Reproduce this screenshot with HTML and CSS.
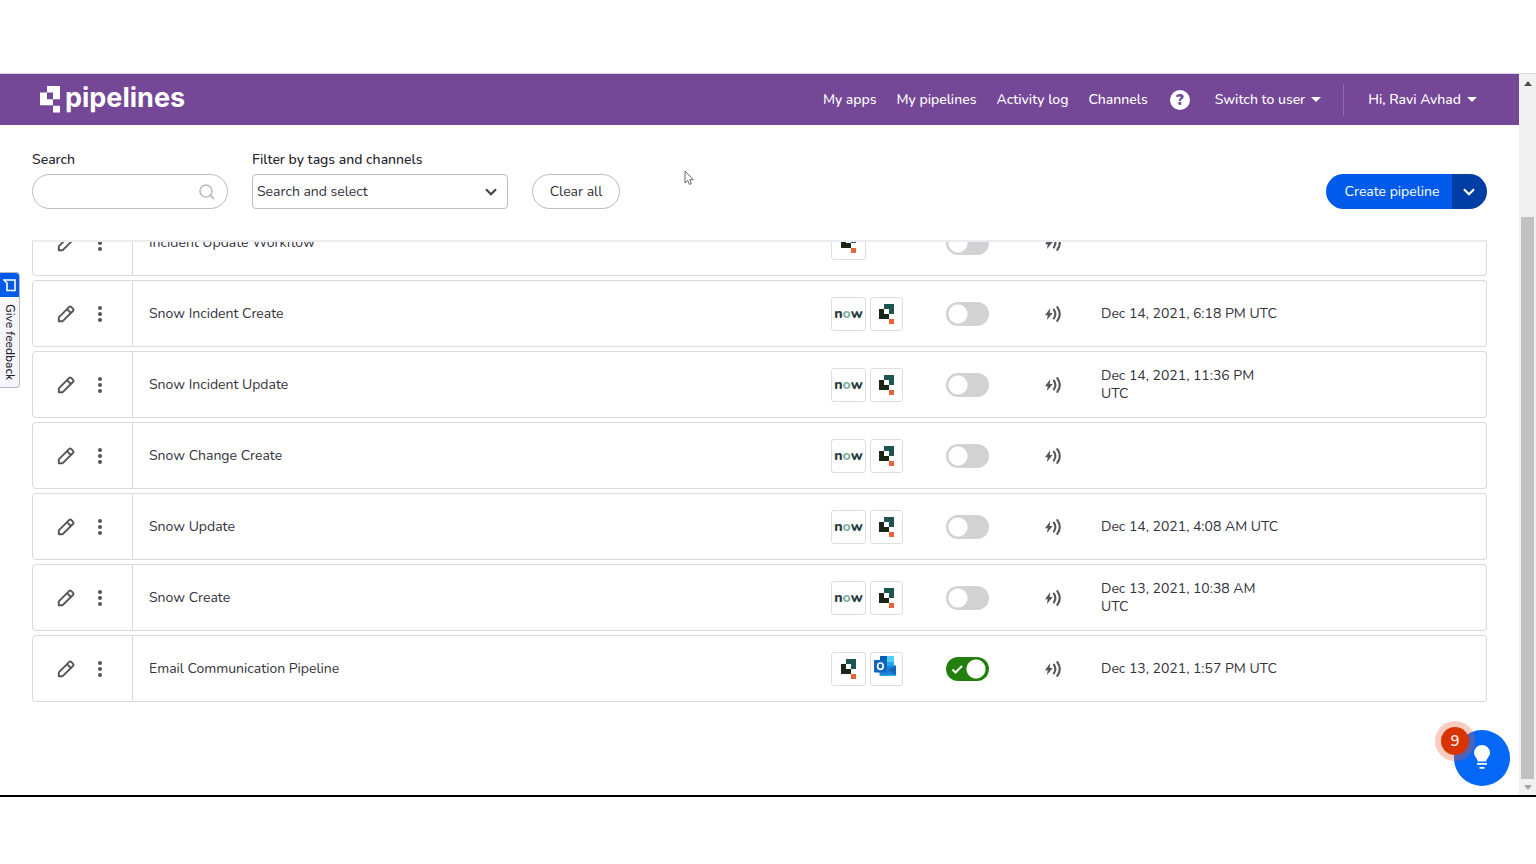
FILE: index.html
```html
<!DOCTYPE html>
<html lang="en">
<head>
<meta charset="utf-8">
<meta name="viewport" content="width=device-width, initial-scale=1">
<title>Pipelines</title>
<link rel="stylesheet" href="styles.css">
</head>
<body>
<svg class="sprite" aria-hidden="true">
  <symbol id="pencil" viewBox="0 0 18 18"><path d="M1.800 16.200v-3.900L12 2.100a1.700 1.700 0 0 1 2.400 0l1.500 1.500a1.700 1.700 0 0 1 0 2.400L5.700 16.200zM10 4.200l3.800 3.800" fill="none" stroke="currentColor" stroke-width="1.900" stroke-linejoin="round"/></symbol>
  <symbol id="dots" viewBox="0 0 6 18"><circle cx="3" cy="3" r="2"/><circle cx="3" cy="9" r="2"/><circle cx="3" cy="15" r="2"/></symbol>
  <symbol id="trigger" viewBox="0 0 18 18"><path d="M5.200 3.200 0 10.300h2.700L2 15l5.700-7H4.700z" fill="currentColor"/><path d="M8.900 4.600q3 4.400 0 8.800M12.300 2.200q5 6.800 0 13.600" fill="none" stroke="currentColor" stroke-width="2.100" stroke-linecap="round"/></symbol>
  <symbol id="quick" viewBox="0 0 15 20"><path d="M5 0H15v10h-5V5H5z" fill="#1d5650"/><path d="M0 5h5v5h5v5H0z" fill="#1c2416"/><path d="M10 15h5v5h-5z" fill="#ec6238"/></symbol>
  <symbol id="outlook" viewBox="0 0 22 21"><path d="M6 0h14v11H6z" fill="#1490df"/><path d="M6 0h7v6H6z" fill="#0a5fb0"/><path d="M13 0h7v6h-7z" fill="#50d0f5"/><path d="M13 6h7v6h-7z" fill="#28a8ea"/><path d="M5.500 10.500 22 9.500V20H7q-1.500 0-1.500-1.500z" fill="#1b84d8"/><path d="M22 9.500V19l-8-5z" fill="#1467b8"/><path d="M6 19.500 22 19v1H7z" fill="#35b8f1"/><rect y="4" width="13" height="12.500" rx="1" fill="#0c65c0"/><ellipse cx="6.400" cy="10.200" rx="2.800" ry="3.200" fill="none" stroke="#fff" stroke-width="1.700"/></symbol>
  <symbol id="chevron" viewBox="0 0 14 10"><path d="m2 2.300 5 5 5-5" fill="none" stroke="currentColor" stroke-width="2.200"/></symbol>
</svg>

<div class="window">
  <div class="app">
    <header class="topbar">
      <a class="brand" href="#">
        <svg width="21" height="27" viewBox="0 0 21 27" aria-hidden="true"><path d="M7 0h13v13.300h-7V6.500H7zM0 6.500h7v6.800h6v6H0zM13 19.800h7V26.500h-7z" fill="#fff"/></svg>
        <span>pipelines</span>
      </a>
      <nav class="nav">
        <a href="#">My apps</a>
        <a href="#">My pipelines</a>
        <a href="#">Activity log</a>
        <a href="#">Channels</a>
        <button class="help" type="button" aria-label="Help">?</button>
        <button class="menu" type="button">Switch to user <i class="caret"></i></button>
        <button class="menu user" type="button">Hi, Ravi Avhad <i class="caret"></i></button>
      </nav>
    </header>

    <form class="filters">
      <div class="field search">
        <label for="q">Search</label>
        <div class="control">
          <input id="q" type="text">
          <svg class="lens" width="18" height="18" viewBox="0 0 18 18" aria-hidden="true"><circle cx="8" cy="8" r="6" fill="none" stroke="#bcbcc2" stroke-width="1.700"/><path d="m12.400 12.400 3.600 3.600" stroke="#bcbcc2" stroke-width="1.900"/></svg>
        </div>
      </div>
      <div class="field tags">
        <label for="tags">Filter by tags and channels</label>
        <div class="control">
          <select id="tags"><option>Search and select</option></select>
          <svg class="arrow" width="14" height="10"><use href="#chevron"/></svg>
        </div>
      </div>
      <button class="clear" type="reset">Clear all</button>
      <div class="create">
        <button class="create-main" type="button">Create pipeline</button>
        <button class="create-more" type="button" aria-label="More options"><svg width="14" height="10"><use href="#chevron"/></svg></button>
      </div>
    </form>

    <main class="list">
      <table class="pipelines">
        <colgroup><col class="c-actions"><col><col class="c-channels"><col class="c-toggle"><col class="c-trigger"><col class="c-date"><col class="c-end"></colgroup>
        <tbody id="rows"></tbody>
      </table>
    </main>

    <button class="feedback" type="button">
      <span class="feedback-icon"><svg width="14" height="14" viewBox="0 0 14 14" aria-hidden="true"><path d="M1 2h11v10.500H4V5z" fill="none" stroke="#fff" stroke-width="1.600"/></svg></span>
      <span class="feedback-text">Give feedback</span>
    </button>

    <button class="tips" type="button" aria-label="Tips">
      <svg width="18" height="26" viewBox="0 0 18 26" aria-hidden="true"><path d="M9 0a8 8 0 0 1 8 8c0 3.500-3.500 5-3.700 8.500H4.700C4.500 13 1 11.500 1 8a8 8 0 0 1 8-8zM4 18h10v1.800H4zM6.500 22h5v1.800h-5z" fill="#fff"/></svg>
      <span class="badge">9</span>
    </button>
  </div>

  <div class="scrollbar" aria-hidden="true">
    <i class="up"></i><div class="thumb"></div><i class="down"></i>
  </div>
  <svg class="pointer" width="10" height="16" viewBox="0 0 10 16" aria-hidden="true"><path d="M1 1v12l2.700-2.600 1.700 4 2-.8-1.700-3.900h3.600z" fill="#fff" stroke="#66666c" stroke-width="1"/></svg>
</div>
<script src="app.js"></script>
</body>
</html>
```

FILE: styles.css
```css
* { box-sizing: border-box; }

body {
  margin: 0;
  height: 100vh;
  padding: 73px 0 67px;
  background: #fff;
  color: #33333b;
  font: 14px/18px "Nunito", "Nunito Sans", Lato, sans-serif;
}

button, input, select { font: inherit; color: inherit; margin: 0; }
button { cursor: pointer; border: 0; padding: 0; background: none; }
svg { display: block; }
.sprite { position: absolute; width: 0; height: 0; }

.window {
  position: relative;
  display: flex;
  height: 100%;
  border-top: 1px solid #dcd3e4;
  border-bottom: 2px solid #000;
}
.app {
  position: relative;
  flex: 1;
  min-width: 0;
  display: flex;
  flex-direction: column;
}

/* Header */
.topbar {
  display: flex;
  justify-content: space-between;
  align-items: center;
  flex: none;
  height: 51px;
  padding: 0 42px 0 40px;
  background: #744896;
  color: #fff;
}
.brand {
  display: flex;
  align-items: center;
  gap: 4px;
  padding-bottom: 1px;
  color: #fff;
  text-decoration: none;
  font: 700 27px/32px Inter, sans-serif;
}
.brand span { padding-bottom: 3px; }
.nav { display: flex; align-items: center; gap: 20px; font-weight: 500; }
.nav a { color: inherit; text-decoration: none; }
.help {
  width: 20px;
  height: 20px;
  margin: 0 5px 0 2px;
  border-radius: 50%;
  background: #fff;
  color: #744896;
  font-size: 16px;
  font-weight: 900;
}
.menu { display: flex; align-items: center; gap: 6px; font-weight: 500; }
.menu.user {
  height: 32px;
  margin-left: 2px;
  padding-left: 24px;
  border-left: 1px solid #8f6bab;
}
.caret {
  border: 5px solid transparent;
  border-top-color: #fff;
  border-bottom: 0;
}

/* Filters */
.filters {
  display: flex;
  align-items: flex-end;
  gap: 24px;
  flex: none;
  padding: 26px 32px 31px;
}
.field { display: flex; flex-direction: column; gap: 5px; }
.field label { color: #22222a; font-weight: 500; }
.search { width: 196px; }
.tags { width: 256px; }
.control { position: relative; }
.control input, .control select {
  display: block;
  width: 100%;
  height: 35px;
  border: 1px solid #bcbcc2;
  background: #fff;
}
.control input { border-radius: 18px; padding: 0 36px 0 16px; }
.control select { appearance: none; border-radius: 4px; padding: 0 32px 0 4px; }
.lens { position: absolute; right: 12px; top: 9px; }
.arrow { position: absolute; right: 10px; top: 13px; pointer-events: none; color: #44444a; }
.clear {
  width: 88px;
  height: 35px;
  border: 1px solid #bcbcc2;
  border-radius: 18px;
  background: #fff;
}
.create {
  display: flex;
  height: 35px;
  margin-left: auto;
  border-radius: 18px;
  overflow: hidden;
  color: #fff;
}
.create-main { width: 126px; padding-left: 6px; background: #005bea; }
.create-more { width: 35px; padding-left: 10px; background: #003ea6; }

/* Pipeline rows */
.list {
  flex: 1;
  min-height: 0;
  margin: 0 32px;
  border-top: 2px solid #ececf0;
  overflow: hidden;
}
.pipelines {
  width: 100%;
  margin-top: -37px;
  table-layout: fixed;
  border-collapse: separate;
  border-spacing: 0 4px;
}
.c-actions { width: 101px; }
.c-channels { width: 115px; }
.c-toggle { width: 99px; }
.c-trigger { width: 56px; }
.c-date { width: 180px; }
.c-end { width: 206px; }
.pipelines td {
  height: 67px;
  padding: 1px 0 0;
  border: solid #d9d9dc;
  border-width: 1px 0;
}
.pipelines td:first-child { border-width: 1px; border-radius: 4px 0 0 4px; }
.pipelines td:last-child { border-right-width: 1px; border-radius: 0 4px 4px 0; }
.pipelines .name { padding-left: 16px; }
.actions { display: flex; gap: 22px; padding-left: 24px; color: #55555a; }
.actions svg { fill: currentColor; }
.channels { display: flex; gap: 4px; }
.channel {
  display: flex;
  align-items: center;
  justify-content: center;
  width: 35px;
  height: 34px;
  border: 1px solid #dededf;
  border-radius: 3px;
  color: #283c3c;
  font: 800 14px/16px Nunito, Lato, sans-serif;
}
.channel + .channel { width: 33px; }
.channel.outlook { padding: 0 3px 5px 0; }
.channel em { color: #86b3a4; font-style: normal; }
.toggle {
  appearance: none;
  display: block;
  width: 43px;
  height: 24px;
  margin: 0;
  border-radius: 12px;
  background: radial-gradient(circle at 12px 12px, #fff 9px, transparent 10px) #d2d2d5;
}
.toggle:checked {
  background: radial-gradient(circle at 30px 12px, #fff 9px, transparent 10px) #23800f;
}
.switch { position: relative; display: block; }
.switch svg { position: absolute; left: 5px; top: 7px; }
.trigger { color: #55555a; }

/* Floating controls */
.feedback {
  position: absolute;
  left: 0;
  top: 198px;
  width: 20px;
  border: 1px solid #b9b9c0;
  border-left: 0;
  border-radius: 0 4px 4px 0;
  background: #f6f5fa;
  overflow: hidden;
  font-size: 12px;
  font-weight: 500;
  line-height: 20px;
  color: #22222a;
}
.feedback-icon {
  display: flex;
  align-items: center;
  justify-content: center;
  height: 24px;
  padding-left: 1px;
  background: #005bea;
}
.feedback-text { display: block; padding: 7px 0; writing-mode: vertical-rl; }
.tips {
  position: absolute;
  right: 9px;
  bottom: 9px;
  display: flex;
  align-items: center;
  justify-content: center;
  width: 56px;
  height: 56px;
  border-radius: 50%;
  background: #0567f5;
}
.badge {
  position: absolute;
  left: -13px;
  top: -3px;
  width: 28px;
  height: 28px;
  border-radius: 50%;
  background: #d93400;
  box-shadow: 0 0 0 6px rgba(240, 90, 50, .3);
  color: #fff;
  font-size: 15px;
  font-weight: 500;
  line-height: 28px;
  text-align: center;
}
.pointer { position: absolute; left: 684px; top: 96px; }

/* Scrollbar */
.scrollbar {
  display: flex;
  flex-direction: column;
  align-items: center;
  width: 17px;
  padding: 7px 0 5px;
  background: #f1f1f1;
}
.up { border: 4px solid transparent; border-bottom: 5px solid #505050; border-top: 0; }
.down { border: 4px solid transparent; border-top: 5px solid #a3a3a3; border-bottom: 0; }
.thumb { flex: 1; width: 13px; margin: 131px 0 6px; background: #c1c1c1; }
```

FILE: app.js
```js
const pipelines = [
  { name: "Incident Update Workflow", channels: ["quick"], date: "" },
  { name: "Snow Incident Create", channels: ["now", "quick"], date: "Dec 14, 2021, 6:18 PM UTC" },
  { name: "Snow Incident Update", channels: ["now", "quick"], date: "Dec 14, 2021, 11:36 PM UTC" },
  { name: "Snow Change Create", channels: ["now", "quick"], date: "" },
  { name: "Snow Update", channels: ["now", "quick"], date: "Dec 14, 2021, 4:08 AM UTC" },
  { name: "Snow Create", channels: ["now", "quick"], date: "Dec 13, 2021, 10:38 AM UTC" },
  { name: "Email Communication Pipeline", channels: ["quick", "outlook"], date: "Dec 13, 2021, 1:57 PM UTC", on: true }
];

const marks = {
  now: "<span>n<em>o</em>w</span>",
  quick: '<svg width="15" height="20"><use href="#quick"/></svg>',
  outlook: '<svg width="22" height="21"><use href="#outlook"/></svg>'
};
const check = '<svg width="13" height="11" viewBox="0 0 13 11"><path d="m1.500 5.500 3 3L11 2" fill="none" stroke="#fff" stroke-width="2"/></svg>';

document.getElementById("rows").innerHTML = pipelines.map(p => `
  <tr>
    <td><div class="actions">
      <button type="button" aria-label="Edit ${p.name}"><svg width="18" height="18"><use href="#pencil"/></svg></button>
      <button type="button" aria-label="More for ${p.name}"><svg width="6" height="18"><use href="#dots"/></svg></button>
    </div></td>
    <td class="name">${p.name}</td>
    <td><div class="channels">${p.channels.map(c => `<span class="channel ${c}">${marks[c]}</span>`).join("")}</div></td>
    <td><label class="switch"><input class="toggle" type="checkbox" aria-label="Turn on ${p.name}" ${p.on ? "checked" : ""}>${p.on ? check : ""}</label></td>
    <td class="trigger"><svg width="18" height="18"><use href="#trigger"/></svg></td>
    <td>${p.date}</td>
    <td></td>
  </tr>`).join("");
```
